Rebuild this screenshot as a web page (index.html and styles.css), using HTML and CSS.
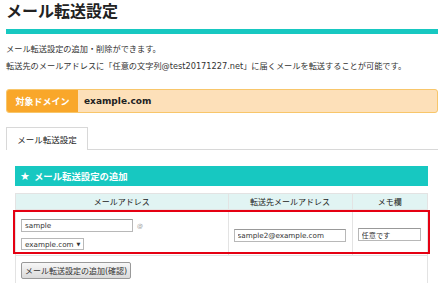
FILE: index.html
```html
<!DOCTYPE html>
<html lang="ja">
<head>
    <meta charset="UTF-8">
    <meta name="viewport" content="width=device-width, initial-scale=1.0">
    <title>メール転送設定</title>
    <link rel="stylesheet" href="styles.css">
</head>
<body>
    <div class="page">
        <!-- Page title -->
        <h1 class="page-title">メール転送設定</h1>

        <p class="lead">メール転送設定の追加・削除ができます。<br>転送先のメールアドレスに「任意の文字列@test20171227.net」に届くメールを転送することが可能です。</p>

        <!-- Target domain -->
        <div class="domain">
            <span class="domain-label">対象ドメイン</span>
            <span class="domain-value">example.com</span>
        </div>

        <!-- Tabs -->
        <div class="tabs">
            <span class="tab">メール転送設定</span>
        </div>

        <!-- Add forwarding panel -->
        <div class="panel">
            <h2 class="panel-head"><span class="star">★</span>メール転送設定の追加</h2>
            <div class="panel-body">
                <table class="fwd-table">
                    <tr>
                        <th class="col-addr">メールアドレス</th>
                        <th class="col-dest">転送先メールアドレス</th>
                        <th>メモ欄</th>
                    </tr>
                    <tr>
                        <td class="cell-addr">
                            <div class="addr-line">
                                <input type="text" class="field field-user" value="sample">
                                <span class="at">@</span>
                            </div>
                            <div class="select">example.com <span class="caret">▼</span></div>
                        </td>
                        <td><input type="text" class="field field-dest" value="sample2@example.com"></td>
                        <td><input type="text" class="field field-memo" value="任意です"></td>
                    </tr>
                </table>
                <div class="actions">
                    <button type="button" class="btn">メール転送設定の追加(確認)</button>
                </div>
                <!-- red annotation box -->
                <div class="highlight"></div>
            </div>
        </div>
    </div>
</body>
</html>
```

FILE: styles.css
```css
/* Reset */
* {
    margin: 0;
    padding: 0;
    box-sizing: border-box;
}

body {
    font-family: "DejaVu Sans", "Noto Sans CJK JP", sans-serif;
    color: #333;
    background-color: #fff;
}

.page {
    padding: 0 7px 0 6px;
}

/* Title */
.page-title {
    font-size: 16px;
    line-height: 24px;
    font-weight: bold;
    color: #222;
    padding-bottom: 5px;
    border-bottom: 5px solid #17c8c1;
}

.lead {
    font-size: 8.2px;
    line-height: 17px;
    margin-top: 7px;
}

/* Domain box */
.domain {
    display: flex;
    height: 24px;
    margin-top: 14px;
    background-color: #fde0b9;
    border: 1px solid #f8c66a;
    border-radius: 3px;
    overflow: hidden;
}

.domain-label {
    width: 71px;
    display: flex;
    align-items: center;
    justify-content: center;
    background-color: #f9a72a;
    color: #fff;
    font-size: 9px;
    font-weight: bold;
}

.domain-value {
    display: flex;
    align-items: center;
    padding-left: 6px;
    font-size: 9px;
    font-weight: bold;
    color: #222;
}

/* Tabs */
.tabs {
    display: flex;
    margin-top: 14px;
    border-bottom: 1px solid #d8d8d8;
}

.tab {
    width: 82px;
    height: 23px;
    margin-bottom: -1px;
    display: flex;
    align-items: center;
    justify-content: center;
    background-color: #fff;
    border: 1px solid #d8d8d8;
    border-bottom: none;
    font-size: 8.5px;
    color: #222;
}

/* Panel */
.panel {
    margin: 16px 10px 0 9px;
}

.panel-head {
    height: 20px;
    display: flex;
    align-items: center;
    gap: 4px;
    padding-left: 5px;
    background-color: #17c8c1;
    color: #fff;
    font-size: 9.4px;
    font-weight: bold;
}

.star {
    font-size: 11px;
}

.panel-body {
    position: relative;
    margin-top: 7px;
    border: 1px solid #e3e3e3;
}

.fwd-table {
    width: 100%;
    border-collapse: collapse;
}

.fwd-table th {
    height: 15px;
    background-color: #e1f4f3;
    font-size: 8px;
    font-weight: normal;
    color: #222;
    border-bottom: 1px solid #e3e3e3;
}

.fwd-table th + th,
.fwd-table td + td {
    border-left: 1px solid #e3e3e3;
}

.col-addr {
    width: 212px;
}

.col-dest {
    width: 124px;
}

.fwd-table td {
    padding: 0 5px;
    vertical-align: middle;
    border-bottom: 1px solid #e3e3e3;
}

.fwd-table .cell-addr {
    padding: 9px 5px 4px;
}

.addr-line {
    display: flex;
    align-items: center;
}

.field {
    height: 13px;
    padding: 0 3px;
    font-family: inherit;
    font-size: 7.2px;
    color: #333;
    border: 1px solid #b8b8b8;
    border-top-color: #999;
    background-color: #fff;
}

.field-user,
.field-dest {
    width: 112px;
}

.field-memo {
    width: 63px;
}

.at {
    margin-left: 4px;
    font-size: 6px;
    color: #999;
}

.select {
    display: inline-flex;
    align-items: center;
    gap: 3px;
    width: 63px;
    height: 12px;
    margin-top: 5px;
    padding: 0 3px;
    font-size: 7.2px;
    border: 1px solid #b8b8b8;
    background-color: #fff;
}

.caret {
    font-size: 5px;
}

.actions {
    padding: 3px 5px 5px;
}

.btn {
    height: 17px;
    padding: 0 3px;
    font-family: inherit;
    font-size: 8px;
    color: #333;
    border: 1px solid #999;
    border-radius: 2px;
    background: linear-gradient(#f7f7f7, #dadada);
}

.highlight {
    position: absolute;
    left: -3px;
    top: 16px;
    width: 417px;
    height: 44px;
    border: 2px solid #e50012;
}
```
